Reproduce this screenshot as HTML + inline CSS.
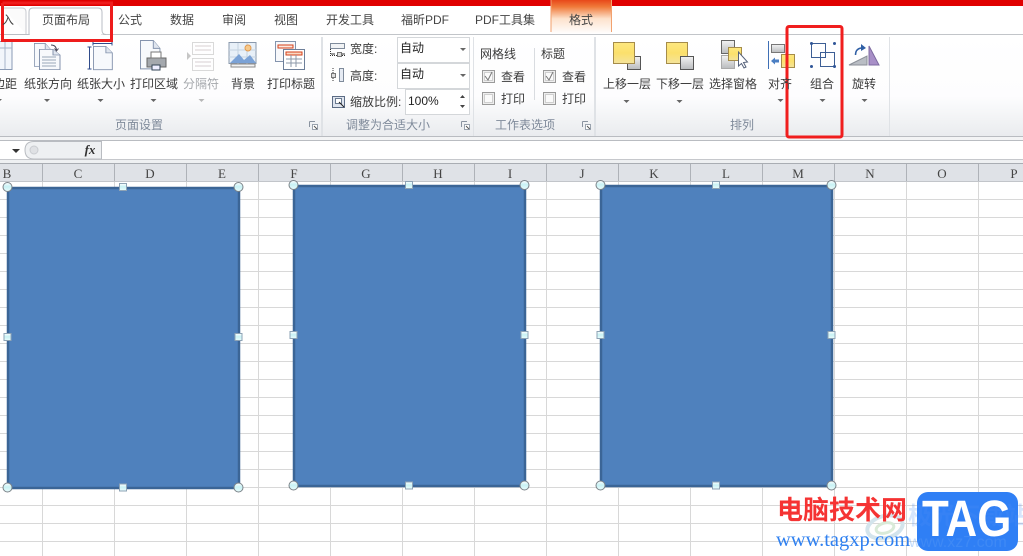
<!DOCTYPE html>
<html><head><meta charset="utf-8">
<style>
html,body{margin:0;padding:0;background:#fff}
#p{position:relative;width:1023px;height:556px;overflow:hidden;background:#fff;font-family:"Liberation Sans","Noto Sans CJK SC",sans-serif;font-size:12px;color:#3b3b3b;filter:blur(.3px)}
.a{position:absolute;white-space:nowrap;line-height:16px}
.c{text-align:center;transform:translateX(-50%)}
.t{top:12px;color:#444}
.g{color:#7f8a9a;top:117px}
.h{position:absolute;top:166px;font:13px/16px "Liberation Serif",serif;color:#444;transform:translateX(-50%)}
svg{position:absolute;left:0;top:0}
</style></head><body><div id="p">
<svg width="1023" height="556" xmlns="http://www.w3.org/2000/svg">
<defs>
<linearGradient id="rb" x1="0" y1="0" x2="0" y2="1"><stop offset="0" stop-color="#fff"/><stop offset=".6" stop-color="#fdfdfe"/><stop offset="1" stop-color="#e9ebee"/></linearGradient>
<linearGradient id="or" x1="0" y1="0" x2="0" y2="1"><stop offset="0" stop-color="#e8481a"/><stop offset=".2" stop-color="#f07a3a"/><stop offset=".55" stop-color="#fde2cc"/><stop offset="1" stop-color="#fff"/></linearGradient>
<linearGradient id="ye" x1="0" y1="0" x2="0" y2="1"><stop offset="0" stop-color="#fde77f"/><stop offset=".5" stop-color="#fbe06c"/><stop offset="1" stop-color="#f4e49c"/></linearGradient>
<linearGradient id="gy" x1="0" y1="0" x2="0" y2="1"><stop offset="0" stop-color="#f3f3f3"/><stop offset="1" stop-color="#b9bbbe"/></linearGradient>
<linearGradient id="hd" x1="0" y1="0" x2="0" y2="1"><stop offset="0" stop-color="#fff"/><stop offset=".45" stop-color="#c8f2f5"/><stop offset="1" stop-color="#eafcfc"/></linearGradient>
<pattern id="grid" x="42" y="182" width="72" height="18" patternUnits="userSpaceOnUse"><path d="M.5 0V18M0 17.5H72" stroke="#d8d8d8" fill="none"/></pattern>
<g id="arr"><path d="M-3 0H3L0 3Z" fill="#666"/></g>
<g id="dlg"><path d="M.5 .5H6M.5 .5V6" stroke="#8a93a0" fill="none"/><rect x="3.500" y="3.500" width="5" height="5" fill="#fff" stroke="#9aa3ae"/><path d="M5 5L8 8" stroke="#555"/></g>
<g id="rc"><circle r="4.500" fill="url(#hd)" stroke="#7b8288"/></g>
<g id="sq"><rect x="-3.500" y="-3.500" width="7" height="7" fill="url(#hd)" stroke="#8ea3b5"/></g>
<g id="up"><rect x="14.500" y="14.500" width="13" height="13" fill="url(#gy)" stroke="#555"/><rect x=".5" y=".5" width="21" height="21" fill="url(#ye)" stroke="#a58c4a"/></g>
<g id="dn"><rect x=".5" y=".5" width="21" height="21" fill="url(#ye)" stroke="#a58c4a"/><rect x="14.500" y="14.500" width="13" height="13" fill="url(#gy)" stroke="#555"/></g>
<g id="cb"><rect x=".5" y=".5" width="12" height="12" fill="#eeeeee" stroke="#9a9a9a"/><rect x="2.500" y="2.500" width="8" height="8" fill="#fafafa" stroke="#cfcfcf"/></g>
<g id="doc"><path d="M.5 .5H14L21 8V27.5H.5Z" fill="#f7f9fc" stroke="#8493ad"/><path d="M14 .5V8H21" fill="#dfe5ee" stroke="#8493ad"/></g>
</defs>

<!-- top -->
<rect width="1023" height="6" fill="#e00000"/>
<rect x="0" y="6" width="1023" height="28" fill="#fff"/>
<rect x="551" y="0" width="61" height="34" fill="url(#or)"/>
<path d="M551 0V32M611.500 0V32" stroke="#f2a26f" fill="none"/>
<!-- ribbon -->
<rect x="0" y="34" width="1023" height="103" fill="url(#rb)"/>
<path d="M0 34.500H1023" stroke="#c2c5c9"/>
<path d="M3 8H22Q26 8 26 12V34" stroke="#c8cbd0" fill="#fbfbfb"/>
<path d="M0 34.500H29V12Q29 8 33 8H98Q102 8 102 12V30Q102 34.500 106 34.500" stroke="#babec4" fill="#fff"/>
<rect x="30" y="33" width="71" height="3" fill="#fff"/>
<!-- group separators -->
<path d="M321.500 37V136M322.500 37V136M473.500 37V136M594.500 37V136M595.500 37V136M889.500 37V136" stroke="#dfe2e6"/>
<path d="M534.500 48V100" stroke="#d9dce0"/>
<rect x="0" y="136" width="1023" height="5" fill="#f3f4f5"/>
<path d="M0 136.500H1023M0 140.500H1023" stroke="#b9bcc1"/>
<!-- formula bar -->
<rect x="0" y="141" width="1023" height="18" fill="#fff"/>
<path d="M0 159.500H1023" stroke="#c6c8cc"/>
<path d="M34 141.500H101.500V159H34Q25 159 25 150Q25 141.500 34 141.500Z" fill="#eef0f2" stroke="#b9bcc1"/>
<circle cx="34" cy="150" r="4" fill="#dfe1e4" stroke="#c9ccd0"/>
<path d="M12 149H20L16 153Z" fill="#333"/>
<rect x="0" y="160" width="1023" height="3" fill="#eef0f2"/>
<path d="M0 163.500H1023" stroke="#a9adb3"/>
<!-- grid -->
<rect x="0" y="181" width="1023" height="375" fill="#fff"/>
<rect x="0" y="181" width="1023" height="375" fill="url(#grid)"/>
<path d="M42.500 181V556" stroke="#d8d8d8"/>
<!-- headers -->
<rect x="0" y="164" width="1023" height="17" fill="#dfe2e7"/>
<path d="M42.500 164V181M114.500 164V181M186.500 164V181M258.500 164V181M330.500 164V181M402.500 164V181M474.500 164V181M546.500 164V181M618.500 164V181M690.500 164V181M762.500 164V181M834.500 164V181M906.500 164V181M978.500 164V181" stroke="#aeb2b8"/>
<path d="M0 181.500H1023" stroke="#c2c5ca"/>

<!-- shapes -->
<rect x="8" y="188" width="231" height="300" fill="#4f81bd" stroke="#3b6596" stroke-width="2.500"/>
<rect x="294" y="186" width="231" height="300" fill="#4f81bd" stroke="#3b6596" stroke-width="2.500"/>
<rect x="601" y="186" width="231" height="300" fill="#4f81bd" stroke="#3b6596" stroke-width="2.500"/>
<g>
<use href="#rc" x="7.500" y="187"/><use href="#sq" x="123" y="187"/><use href="#rc" x="238.500" y="187"/><use href="#sq" x="7.500" y="337"/><use href="#sq" x="238.500" y="337"/><use href="#rc" x="7.500" y="487.500"/><use href="#sq" x="123" y="487.500"/><use href="#rc" x="238.500" y="487.500"/>
<use href="#rc" x="293.500" y="185"/><use href="#sq" x="409" y="185"/><use href="#rc" x="524.500" y="185"/><use href="#sq" x="293.500" y="335"/><use href="#sq" x="524.500" y="335"/><use href="#rc" x="293.500" y="485.500"/><use href="#sq" x="409" y="485.500"/><use href="#rc" x="524.500" y="485.500"/>
<use href="#rc" x="600.500" y="185"/><use href="#sq" x="716" y="185"/><use href="#rc" x="831.500" y="185"/><use href="#sq" x="600.500" y="335"/><use href="#sq" x="831.500" y="335"/><use href="#rc" x="600.500" y="485.500"/><use href="#sq" x="716" y="485.500"/><use href="#rc" x="831.500" y="485.500"/>
</g>

<!-- ribbon icons: margins -->
<rect x="-8" y="41.500" width="20" height="28" fill="#f2f6fb" stroke="#8a9bb5"/><path d="M-8 48H12M5 42V69" stroke="#a5b4c8"/>
<!-- orientation -->
<use href="#doc" transform="translate(34,43) scale(.8,.85)"/>
<use href="#doc" transform="translate(39,49) scale(1,.75)"/>
<path d="M42 57H56M42 60H56M42 63H56M42 66H56" stroke="#9aa6b8"/>
<path d="M51 45Q56 45 56.500 50M54.500 48.500L56.500 51L58.500 48.500" stroke="#445" fill="none"/>
<!-- size -->
<path d="M89.500 47V69M87.500 47H91.500M87.500 69H91.500M93 43.500H112M93 41.500V45.500M112 41.500V45.500" stroke="#2f4b8a"/>
<use href="#doc" transform="translate(93,46) scale(.92,.86)"/>
<!-- print area -->
<use href="#doc" transform="translate(140,40) scale(.95,1.05)"/>
<rect x="147" y="58" width="19" height="9" fill="#a4a8ad" stroke="#666"/><rect x="151" y="52" width="10" height="6" fill="#fff" stroke="#777"/><rect x="152" y="65" width="8" height="5" fill="#eef" stroke="#345"/>
<!-- breaks -->
<g opacity=".55"><path d="M187 52L191 56L187 60Z" fill="#999"/><rect x="192.500" y="42.500" width="21" height="12" fill="#fff" stroke="#bbb"/><rect x="192.500" y="58.500" width="21" height="12" fill="#fff" stroke="#bbb"/><path d="M195 46H211M195 50H211M195 62H211M195 66H211" stroke="#b9a9ac"/></g>
<!-- background -->
<rect x="229" y="42.500" width="27" height="21" fill="#e8f0f8" stroke="#8a99ac"/>
<path d="M229 50H256M229 57H256M238 43V64M247 43V64" stroke="#c4d2e0"/>
<circle cx="248" cy="48" r="3" fill="#f7c98b" stroke="#e09a50"/>
<path d="M230 63L239 54L244 60L250 55L256 63Z" fill="#7ba2d6"/>
<rect x="231" y="64" width="24" height="3" fill="#f3f3f3" stroke="#888"/>
<!-- print titles -->
<rect x="275.500" y="41.500" width="20" height="20" fill="#f7f8fb" stroke="#8494ad"/>
<path d="M278 45H293V48H278Z" fill="#fbe9e0" stroke="#d6401a"/>
<rect x="283.500" y="49.500" width="21" height="20" fill="#fff" stroke="#6d7f99"/>
<path d="M286 52H302V55H286Z" fill="#f9d9c4" stroke="#d6401a"/>
<path d="M286 59H302M286 63H302M291 55V67M296 55V67" stroke="#8c98a9"/>
<!-- scale icons -->
<rect x="330.500" y="43.500" width="14" height="5" fill="#f1f3f5" stroke="#7f8b9b"/><path d="M330.500 49V55.500H345" stroke="#333" stroke-dasharray="1 1" fill="none"/><rect x="337.500" y="52.500" width="4" height="4" fill="#ddd" stroke="#777"/><path d="M331 54H335M342 54H345" stroke="#333"/>
<rect x="339.500" y="68.500" width="4" height="13" fill="#e6ebf3" stroke="#7f8b9b"/><path d="M333 68V82" stroke="#333" stroke-dasharray="1 1"/><rect x="331.500" y="73.500" width="4" height="4" fill="#ddd" stroke="#777"/>
<rect x="332.500" y="96.500" width="12" height="11" fill="#dfe5ef" stroke="#5c6c85"/><rect x="335.500" y="98.500" width="6" height="5" fill="#fff" stroke="#6a7a90"/><path d="M339 102L344 107" stroke="#222"/>
<!-- combos -->
<rect x="397.500" y="37.500" width="72" height="25" fill="#fff" stroke="#d4d7da"/>
<rect x="397.500" y="63.500" width="72" height="25" fill="#fff" stroke="#d4d7da"/>
<rect x="405.500" y="89.500" width="64" height="25" fill="#fff" stroke="#d4d7da"/>
<path d="M460 48H466L463 51Z" fill="#666"/><path d="M460 74H466L463 77Z" fill="#666"/>
<path d="M460 98H465L462.500 95ZM460 105H465L462.500 108Z" fill="#444"/>
<!-- checkboxes -->
<use href="#cb" x="482" y="70"/><use href="#cb" x="482" y="92"/><use href="#cb" x="543" y="70"/><use href="#cb" x="543" y="92"/>
<path d="M485 76L488 80L492 72M546 76L549 80L553 72" stroke="#777" fill="none"/>
<!-- arrange icons -->
<use href="#up" x="613" y="42"/>
<use href="#dn" x="666" y="42"/>
<rect x="721.500" y="40.500" width="13" height="13" fill="url(#gy)" stroke="#666"/>
<rect x="721.500" y="55.500" width="13" height="13" fill="url(#gy)" stroke="#aaa"/>
<rect x="728.500" y="47.500" width="13" height="13" fill="url(#ye)" stroke="#a58c4a"/>
<path d="M738.500 52V66L741.500 63.500L744 68L746 67L743.500 62.500L747.500 62Z" fill="#fff" stroke="#55617a"/>
<path d="M768.500 41V69" stroke="#3f6fb5"/>
<rect x="771.500" y="44.500" width="13" height="8" fill="url(#gy)" stroke="#777"/>
<rect x="781.500" y="54.500" width="13" height="13" fill="url(#ye)" stroke="#a58c4a"/>
<path d="M771 61L775 57.500V59.500H779V62.500H775V64.500Z" fill="#4b7ec2"/>
<g fill="none" stroke="#3c5e95"><rect x="811.500" y="43.500" width="14" height="14"/><rect x="820.500" y="52.500" width="14" height="14"/></g>
<g fill="#2f5597"><circle cx="811.500" cy="43.500" r="1.500"/><circle cx="834.500" cy="43.500" r="1.500"/><circle cx="811.500" cy="66.500" r="1.500"/><circle cx="834.500" cy="66.500" r="1.500"/></g>
<path d="M849 65L867 56V65Z" fill="#b9bdc4" stroke="#8a8f98"/>
<path d="M869 65V46L879 65Z" fill="#a88fc7" stroke="#7d6aa0"/>
<path d="M855.500 55Q855.500 49 861 48" stroke="#2f5fa5" fill="none" stroke-width="1.500"/>
<path d="M861 44L866 48L861 51Z" fill="#2f5fa5"/>
<!-- dropdown arrows -->
<use href="#arr" x="47" y="99"/><use href="#arr" x="100.500" y="99"/><use href="#arr" x="153.500" y="99"/>
<g opacity=".45"><use href="#arr" x="201.500" y="99"/></g>
<use href="#arr" x="626.500" y="100"/><use href="#arr" x="679.500" y="100"/><use href="#arr" x="780.500" y="99"/><use href="#arr" x="822.500" y="99"/><use href="#arr" x="864.500" y="99"/>
<use href="#arr" x="-1" y="99"/>
<use href="#dlg" x="309" y="121"/><use href="#dlg" x="461" y="121"/><use href="#dlg" x="582" y="121"/>
<!-- red annotation -->
<path d="M2.500 3V40.500H111.500V3H2.500" fill="none" stroke="#ee1c1c" stroke-width="3"/>
<rect x="787" y="26.500" width="55" height="110.500" rx="2" fill="none" stroke="#f01e1e" stroke-width="3"/>
<!-- watermark -->
<ellipse cx="885" cy="527" rx="18" ry="11" fill="none" stroke="#d3e4ec" stroke-width="4" transform="rotate(-15 885 527)"/>
<ellipse cx="885" cy="528" rx="9" ry="5" fill="none" stroke="#d9ead8" stroke-width="3" transform="rotate(-15 885 528)"/>
<rect x="917" y="492" width="101" height="59" rx="11" fill="#2f7ff5"/>
</svg>

<span class="a t c" style="left:8px">入</span>
<span class="a t c" style="left:66px">页面布局</span>
<span class="a t c" style="left:130px">公式</span>
<span class="a t c" style="left:182px">数据</span>
<span class="a t c" style="left:234px">审阅</span>
<span class="a t c" style="left:286px">视图</span>
<span class="a t c" style="left:350px">开发工具</span>
<span class="a t c" style="left:425px">福昕PDF</span>
<span class="a t c" style="left:505px">PDF工具集</span>
<span class="a t c" style="left:581px">格式</span>

<span class="a c" style="left:5px;top:76px">边距</span>
<span class="a c" style="left:48px;top:76px">纸张方向</span>
<span class="a c" style="left:101px;top:76px">纸张大小</span>
<span class="a c" style="left:154px;top:76px">打印区域</span>
<span class="a c" style="left:201px;top:76px;color:#a5a8ac">分隔符</span>
<span class="a c" style="left:243px;top:76px">背景</span>
<span class="a c" style="left:291px;top:76px">打印标题</span>
<span class="a c" style="left:627px;top:76px">上移一层</span>
<span class="a c" style="left:680px;top:76px">下移一层</span>
<span class="a c" style="left:733px;top:76px">选择窗格</span>
<span class="a c" style="left:780px;top:76px">对齐</span>
<span class="a c" style="left:822px;top:76px">组合</span>
<span class="a c" style="left:864px;top:76px">旋转</span>

<span class="a g c" style="left:139px">页面设置</span>
<span class="a g c" style="left:388px">调整为合适大小</span>
<span class="a g c" style="left:525px">工作表选项</span>
<span class="a g c" style="left:742px">排列</span>

<span class="a" style="left:350px;top:41px">宽度:</span>
<span class="a" style="left:350px;top:68px">高度:</span>
<span class="a" style="left:350px;top:94px">缩放比例:</span>
<span class="a" style="left:400px;top:40px;color:#222">自动</span>
<span class="a" style="left:400px;top:66px;color:#222">自动</span>
<span class="a" style="left:408px;top:93px;color:#222">100%</span>
<span class="a" style="left:480px;top:46px">网格线</span>
<span class="a" style="left:541px;top:46px">标题</span>
<span class="a" style="left:501px;top:69px">查看</span>
<span class="a" style="left:501px;top:91px">打印</span>
<span class="a" style="left:562px;top:69px">查看</span>
<span class="a" style="left:562px;top:91px">打印</span>
<span class="a c" style="left:90px;top:142px;font:italic bold 13px/16px 'Liberation Serif',serif;color:#333">fx</span>

<span class="h" style="left:7px">B</span><span class="h" style="left:78px">C</span><span class="h" style="left:150px">D</span><span class="h" style="left:222px">E</span><span class="h" style="left:294px">F</span><span class="h" style="left:366px">G</span><span class="h" style="left:438px">H</span><span class="h" style="left:510px">I</span><span class="h" style="left:582px">J</span><span class="h" style="left:654px">K</span><span class="h" style="left:726px">L</span><span class="h" style="left:798px">M</span><span class="h" style="left:870px">N</span><span class="h" style="left:942px">O</span><span class="h" style="left:1014px">P</span>

<span class="a" style="left:777px;top:495px;font-size:26px;line-height:30px;font-weight:700;color:#f53333">电脑技术网</span>
<span class="a" style="left:776px;top:530px;font:20.500px/20px 'Liberation Serif',serif;color:#2f80f0">www.tagxp.com</span>
<span class="a" style="left:908px;top:503px;font-size:24px;line-height:28px;font-weight:700;color:#4f90f5;opacity:.22">极光下载站</span>
<span class="a" style="left:922px;top:490px;width:88px;font:700 51px/58px 'Liberation Sans',sans-serif;color:#fff;transform:scaleX(.86);transform-origin:0 0">TAG</span>
<span class="a" style="left:909px;top:535px;font:16px/16px 'Liberation Sans',sans-serif;color:#5a9cf5;opacity:.35">www.xz7.com</span>
</div></body></html>
